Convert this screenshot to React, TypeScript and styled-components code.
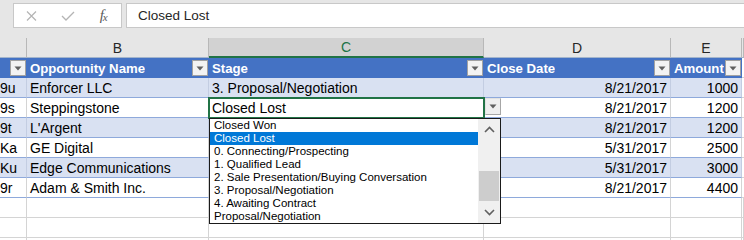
import React from 'react';
import styled, { createGlobalStyle } from 'styled-components';

const GlobalStyle = createGlobalStyle`
  html, body { margin: 0; padding: 0; background: #ffffff; overflow: hidden; }
  body { font-family: "Liberation Sans", Arial, sans-serif; color: #000; }
  * { box-sizing: border-box; }
`;

const COLS = '27px 182px 275px 187px 71px 2px';

const Page = styled.div`
  width: 744px;
  height: 240px;
  overflow: hidden;
`;

const FormulaBar = styled.div`
  height: 38px;
  background: #e6e6e6;
  display: flex;
  align-items: flex-start;
  padding: 3px 0 0 13px;
  gap: 4px;
`;

const IconBox = styled.div`
  width: 109px;
  height: 25px;
  background: #ffffff;
  border: 1px solid #c8c8c8;
  display: flex;
  align-items: center;
`;

const IconSlot = styled.div`
  width: 36px;
  height: 100%;
  display: flex;
  align-items: center;
  justify-content: center;
`;

const FxLabel = styled.span`
  font-family: "Liberation Serif", serif;
  font-style: italic;
  font-size: 15px;
  color: #5a5a5a;
  letter-spacing: -1px;
  small { font-size: 11px; position: relative; top: 1px; }
`;

const FormulaInput = styled.div`
  flex: 1;
  height: 25px;
  background: #ffffff;
  border: 1px solid #c8c8c8;
  border-right: none;
  padding-left: 11px;
  display: flex;
  align-items: center;
  font-size: 13.5px;
  color: #262626;
`;

const Sheet = styled.div`
  position: relative;
`;

const GridRow = styled.div`
  display: grid;
  grid-template-columns: ${COLS};
  height: 20px;
`;

const ColHeader = styled.div<{ $selected?: boolean }>`
  background: ${p => (p.$selected ? '#d2d2d2' : '#e6e6e6')};
  border-right: 1px solid #b8b8b8;
  border-bottom: ${p => (p.$selected ? '2px solid #217346' : '1px solid #a3b5cc')};
  color: ${p => (p.$selected ? '#217346' : '#262626')};
  font-size: 14px;
  display: flex;
  align-items: center;
  justify-content: center;
`;

const HeadCell = styled.div`
  background: #4472c4;
  color: #ffffff;
  font-weight: bold;
  font-size: 13.2px;
  display: flex;
  align-items: center;
  justify-content: space-between;
  padding: 0 1px 0 3px;
  overflow: hidden;
  white-space: nowrap;
`;

const HeadLabel = styled.span`
  overflow: hidden;
`;

const FilterButton = styled.span`
  width: 16px;
  height: 16px;
  flex-shrink: 0;
  background: #f3f3f3;
  border: 1px solid #a2a2a2;
  display: flex;
  align-items: center;
  justify-content: center;
`;

const DataCell = styled.div<{ $band?: boolean; $align?: 'left' | 'right'; $flush?: boolean }>`
  background: ${p => (p.$band ? '#d9e1f2' : '#ffffff')};
  border-bottom: 1px solid #8ea9db;
  border-right: 1px solid ${p => (p.$band ? '#c3cde2' : '#d4d4d4')};
  font-size: 14px;
  line-height: 20px;
  padding: ${p => (p.$flush ? '0' : '0 3px')};
  text-align: ${p => p.$align ?? 'left'};
  white-space: nowrap;
  overflow: hidden;
  color: #000;
`;

const TailCell = styled.div`
  background: #ffffff;
  border-bottom: 1px solid #d4d4d4;
`;

const EmptyCell = styled.div`
  border-right: 1px solid #d4d4d4;
  border-bottom: 1px solid #d4d4d4;
`;

const SelectionBox = styled.div`
  position: absolute;
  left: 208px;
  top: 59px;
  width: 277px;
  height: 22px;
  border: 2px solid #217346;
  pointer-events: none;
`;

const CellDropButton = styled.div`
  position: absolute;
  left: 485px;
  top: 60px;
  width: 16px;
  height: 17px;
  background: #efefef;
  border: 1px solid;
  border-color: #e2e2e2 #a6a6a6 #a6a6a6 #e2e2e2;
  display: flex;
  align-items: center;
  justify-content: center;
`;

const ListBox = styled.div`
  position: absolute;
  left: 209px;
  top: 80px;
  width: 292px;
  height: 106px;
  background: #ffffff;
  border: 1px solid #1a1a1a;
  display: flex;
`;

const ListItems = styled.div`
  flex: 1;
  display: flex;
  flex-direction: column;
`;

const ListItem = styled.div<{ $active?: boolean }>`
  height: 13px;
  line-height: 13px;
  padding-left: 4px;
  font-size: 11.5px;
  white-space: nowrap;
  color: ${p => (p.$active ? '#ffffff' : '#000000')};
  background: ${p => (p.$active ? '#0078d7' : 'transparent')};
`;

const ScrollBar = styled.div`
  width: 22px;
  background: #f0f0f0;
  display: flex;
  flex-direction: column;
`;

const ScrollArrow = styled.div`
  height: 21px;
  display: flex;
  align-items: center;
  justify-content: center;
`;

const ScrollTrack = styled.div`
  flex: 1;
  padding: 0 1px;
`;

const ScrollThumb = styled.div<{ $offset: number; $size: number }>`
  margin-top: ${p => p.$offset}px;
  height: ${p => p.$size}px;
  background: #cdcdcd;
`;

const Triangle = () => (
  <svg width="8" height="5" viewBox="0 0 8 5">
    <path d="M0.5 0.5 L7.5 0.5 L4 4.5 Z" fill="#606060" />
  </svg>
);

const Chevron = ({ up }: { up?: boolean }) => (
  <svg width="11" height="7" viewBox="0 0 11 7">
    <polyline
      points={up ? '1,6 5.5,1.5 10,6' : '1,1 5.5,5.5 10,1'}
      fill="none"
      stroke="#606060"
      strokeWidth="1.6"
    />
  </svg>
);

const headers = ['', 'Opportunity Name', 'Stage', 'Close Date', 'Amount'];
const letters = ['', 'B', 'C', 'D', 'E'];

const rows = [
  ['9u', 'Enforcer LLC', '3. Proposal/Negotiation', '8/21/2017', '1000'],
  ['9s', 'Steppingstone', 'Closed Lost', '8/21/2017', '1200'],
  ['9t', "L'Argent", '', '8/21/2017', '1200'],
  ['Ka', 'GE Digital', '', '5/31/2017', '2500'],
  ['Ku', 'Edge Communications', '', '5/31/2017', '3000'],
  ['9r', 'Adam & Smith Inc.', '', '8/21/2017', '4400'],
];

const options = [
  'Closed Won',
  'Closed Lost',
  '0. Connecting/Prospecting',
  '1. Qualified Lead',
  '2. Sale Presentation/Buying Conversation',
  '3. Proposal/Negotiation',
  '4. Awaiting Contract',
  'Proposal/Negotiation',
];

export default function App() {
  return (
    <Page>
      <GlobalStyle />
      <FormulaBar>
        <IconBox>
          <IconSlot>
            <svg width="11" height="10" viewBox="0 0 11 10">
              <path d="M1 0.5 L10 9.5 M10 0.5 L1 9.5" stroke="#b4b4b4" strokeWidth="1.2" />
            </svg>
          </IconSlot>
          <IconSlot>
            <svg width="14" height="10" viewBox="0 0 14 10">
              <polyline points="1,5 5,9 13,1" fill="none" stroke="#b4b4b4" strokeWidth="1.3" />
            </svg>
          </IconSlot>
          <IconSlot>
            <FxLabel>
              f<small>x</small>
            </FxLabel>
          </IconSlot>
        </IconBox>
        <FormulaInput>Closed Lost</FormulaInput>
      </FormulaBar>
      <Sheet>
        <GridRow>
          {letters.map((l, i) => (
            <ColHeader key={i} $selected={l === 'C'}>
              {l}
            </ColHeader>
          ))}
          <ColHeader />
        </GridRow>
        <GridRow>
          {headers.map((h, i) => (
            <HeadCell key={i}>
              <HeadLabel>{h}</HeadLabel>
              <FilterButton>
                <Triangle />
              </FilterButton>
            </HeadCell>
          ))}
          <TailCell />
        </GridRow>
        {rows.map((r, ri) => (
          <GridRow key={ri}>
            {r.map((v, ci) => (
              <DataCell
                key={ci}
                $band={ri % 2 === 0}
                $flush={ci === 0}
                $align={ci >= 3 ? 'right' : 'left'}
              >
                {v}
              </DataCell>
            ))}
            <TailCell />
          </GridRow>
        ))}
        {[0, 1, 2].map(i => (
          <GridRow key={`e${i}`}>
            {[0, 1, 2, 3, 4, 5].map(c => (
              <EmptyCell key={c} />
            ))}
          </GridRow>
        ))}
        <SelectionBox />
        <CellDropButton>
          <Triangle />
        </CellDropButton>
        <ListBox>
          <ListItems>
            {options.map(o => (
              <ListItem key={o} $active={o === 'Closed Lost'}>
                {o}
              </ListItem>
            ))}
          </ListItems>
          <ScrollBar>
            <ScrollArrow>
              <Chevron up />
            </ScrollArrow>
            <ScrollTrack>
              <ScrollThumb $offset={31} $size={30} />
            </ScrollTrack>
            <ScrollArrow>
              <Chevron />
            </ScrollArrow>
          </ScrollBar>
        </ListBox>
      </Sheet>
    </Page>
  );
}
